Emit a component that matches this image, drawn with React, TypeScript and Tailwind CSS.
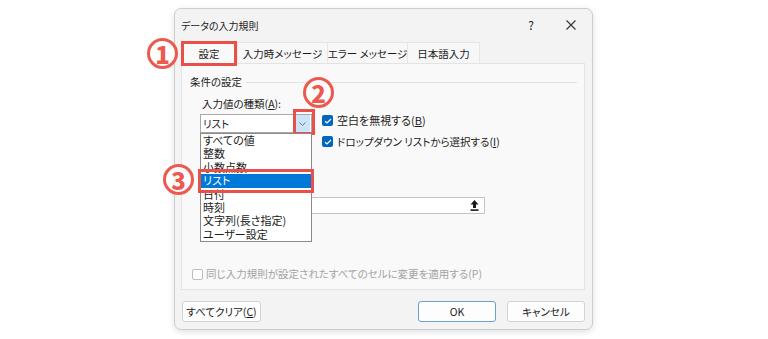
import React from "react";

const red = "border-[#e9504a]";

function Circled({ n, className }: { n: string; className: string }) {
  return (
    <div
      className={`absolute w-[31px] h-[31px] rounded-full border-[3px] border-[#ec5a4f] bg-white/70 flex items-center justify-center text-[#ec5a4f] text-[24px] font-black leading-none font-['Noto_Sans_CJK_JP',sans-serif] ${className}`}
    >
      {n}
    </div>
  );
}

function Check() {
  return (
    <span className="w-[11px] h-[11px] rounded-[2px] bg-[#0067c0] flex items-center justify-center shrink-0">
      <svg width="8" height="6" viewBox="0 0 8 6">
        <path d="M1 3.2 L3 5 L7 1" fill="none" stroke="white" strokeWidth="1.2" />
      </svg>
    </span>
  );
}

const items = ["すべての値", "整数", "小数点数", "リスト", "日付", "時刻", "文字列(長さ指定)", "ユーザー設定"];

export default function App() {
  return (
    <div className="relative w-[768px] h-[339px] bg-white overflow-hidden pl-[174px] pt-[8px] font-['Noto_Sans_CJK_JP',sans-serif] [font-feature-settings:'palt'] text-[10.5px] text-[#1b1b1b]">
      <div className="w-[419px] h-[322px] bg-[#f3f3f3] border border-[#cdcdcd] rounded-[7px] shadow-[0_2px_6px_rgba(0,0,0,0.12)] flex flex-col">
        {/* title bar */}
        <div className="h-[32px] flex items-center pl-[6px] pr-[1px]">
          <span className="flex-1 text-[10px]">データの入力規則</span>
          <span className="w-[40px] text-center text-[12px]">?</span>
          <span className="w-[40px] flex justify-center">
            <svg width="10" height="10" viewBox="0 0 10 10">
              <path d="M0.5 0.5 L9.5 9.5 M9.5 0.5 L0.5 9.5" stroke="#333" strokeWidth="1.1" />
            </svg>
          </span>
        </div>

        {/* tabs */}
        <div className="h-[22px] flex items-start pl-[6px] whitespace-nowrap">
          <div className={`relative z-10 w-[56px] h-[25px] border-[3px] ${red} bg-[#f9f9f9] flex items-center justify-center`}>
            設定
          </div>
          <div className="w-[91px] h-[22px] mt-[1px] bg-[#f7f7f7] border border-b-0 border-[#e6e6e6] flex items-center justify-center">
            入力時メッセージ
          </div>
          <div className="w-[80px] h-[22px] mt-[1px] bg-[#f7f7f7] border border-b-0 border-l-0 border-[#e6e6e6] flex items-center justify-center">
            エラー メッセージ
          </div>
          <div className="w-[72px] h-[22px] mt-[1px] bg-[#f7f7f7] border border-b-0 border-l-0 border-[#e6e6e6] flex items-center justify-center">
            日本語入力
          </div>
        </div>

        {/* panel */}
        <div className="ml-[6px] w-[404px] h-[227px] bg-[#f9f9f9] border border-[#e3e3e3] flex flex-col">
          <div className="mt-[10px] h-[16px] flex items-center pl-[8px] pr-[7px]">
            <span>条件の設定</span>
            <div className="flex-1 h-px bg-[#e2e2e2] ml-[4px]" />
          </div>

          <div className="pl-[18px]">
            <div className="mt-[6px] h-[16px] flex items-center pl-[2px]">
              入力値の種類(<span className="underline">A</span>):
            </div>

            <div className="mt-[2px] flex">
              {/* combobox */}
              <div className="relative w-[112px] h-[19px] bg-white border border-[#a8a8a8] flex items-center">
                <span className="flex-1 pl-[2px]">リスト</span>
                <span className="w-[15px] h-[17px] mr-[1px] bg-[#cce4f7] flex items-center justify-center">
                  <svg width="7" height="4" viewBox="0 0 7 4">
                    <path d="M0.5 0.5 L3.5 3.5 L6.5 0.5" fill="none" stroke="#666" strokeWidth="0.9" />
                  </svg>
                </span>
                <div className={`absolute left-[92px] top-[-6px] w-[22px] h-[26px] border-[3px] ${red}`} />

                {/* dropdown list */}
                <div className="absolute left-[-1px] top-[18px] z-20 w-[112px] h-[109px] bg-white border border-[#8a8a8a] flex flex-col">
                  {items.map((t) => (
                    <div
                      key={t}
                      className={`h-[13.4px] leading-[13.4px] pl-[2px] text-[11px] ${
                        t === "リスト" ? "bg-[#0078d7] text-white" : ""
                      }`}
                    >
                      {t}
                    </div>
                  ))}
                  <div className={`absolute left-[-3px] top-[35px] w-[116px] h-[24px] border-[3px] ${red}`} />
                </div>
              </div>

              <div className="ml-[10px] flex flex-col gap-[8px] whitespace-nowrap">
                <div className="h-[13px] flex items-center gap-[4px]">
                  <Check />
                  <span className="text-[11px]">
                    空白を無視する(<span className="underline">B</span>)
                  </span>
                </div>
                <div className="h-[13px] flex items-center gap-[4px]">
                  <Check />
                  <span>
                    ドロップダウン リストから選択する(<span className="underline">I</span>)
                  </span>
                </div>
              </div>
            </div>

            {/* source field (its label sits under the open list) */}
            <div className="mt-[49px] w-[285px] h-[17px] bg-white border border-[#c4c4c4] flex items-center justify-end pr-[5px]">
              <svg width="9" height="11" viewBox="0 0 9 11">
                <path d="M4.5 0 L8.5 4.5 L6 4.5 L6 8 L3 8 L3 4.5 L0.5 4.5 Z" fill="#1b1b1b" />
                <rect x="0.5" y="9.3" width="8" height="1.6" fill="#1b1b1b" />
              </svg>
            </div>
          </div>

          <div className="mt-[53px] h-[14px] flex items-center gap-[3px] pl-[10px] text-[#a3a3a3] whitespace-nowrap">
            <span className="w-[11px] h-[11px] rounded-[2px] border border-[#bdbdbd] bg-white" />
            <span>同じ入力規則が設定されたすべてのセルに変更を適用する(P)</span>
          </div>
        </div>

        {/* buttons */}
        <div className="mt-[11px] flex pl-[7px] pr-[7px]">
          <div className="w-[79px] h-[21px] bg-[#fdfdfd] border border-[#d3d3d3] rounded-[3px] flex items-center justify-center">
            すべてクリア(<span className="underline">C</span>)
          </div>
          <div className="flex-1" />
          <div className="w-[78px] h-[21px] bg-[#fdfdfd] border border-[#6f9fcf] rounded-[3px] flex items-center justify-center">
            OK
          </div>
          <div className="ml-[11px] w-[78px] h-[21px] bg-[#fdfdfd] border border-[#d3d3d3] rounded-[3px] flex items-center justify-center">
            キャンセル
          </div>
        </div>
      </div>

      <Circled n="1" className="left-[147px] top-[38px]" />
      <Circled n="2" className="left-[303px] top-[77px]" />
      <Circled n="3" className="left-[163px] top-[164px]" />
    </div>
  );
}
